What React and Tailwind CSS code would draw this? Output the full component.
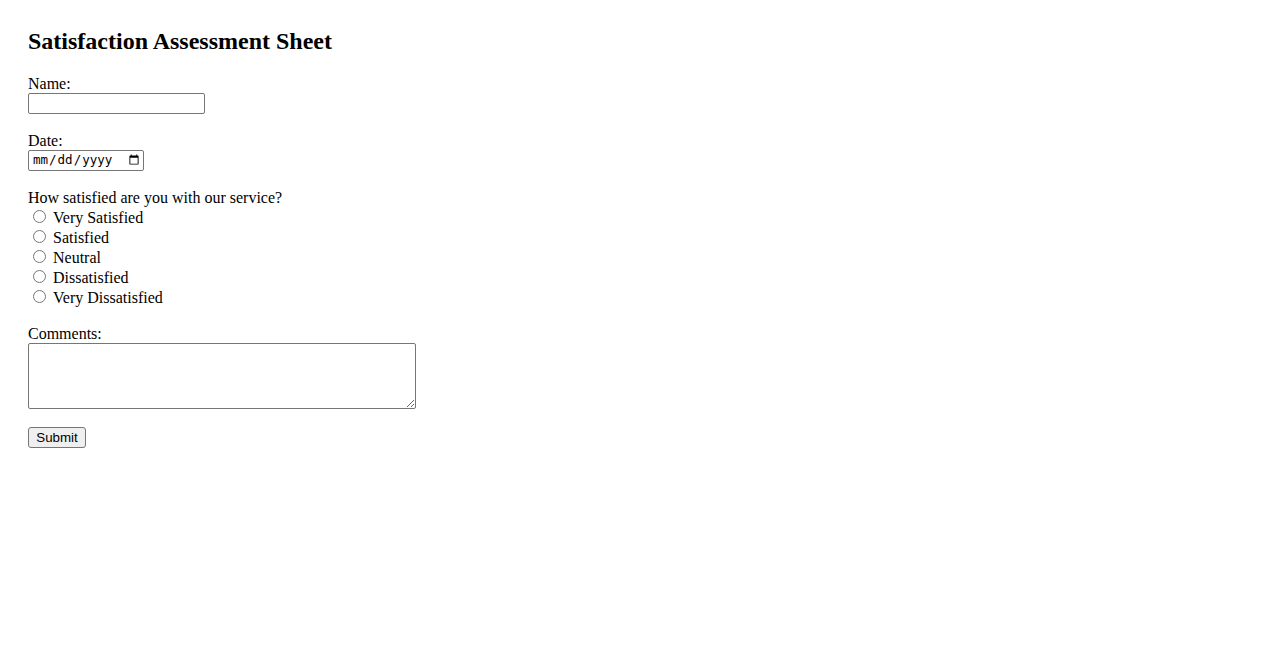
export default function App() {
  const options = ["Very Satisfied", "Satisfied", "Neutral", "Dissatisfied", "Very Dissatisfied"];
  return (
    <div className="min-h-[650px] bg-white text-black pt-[28px] pl-[28px] font-['Liberation_Serif',serif] text-[16px]">
      <h2 className="text-[24px] font-bold leading-[27px] h-[27px]">Satisfaction Assessment Sheet</h2>
      <form className="flex flex-col items-start mt-[20px]" onSubmit={(e) => e.preventDefault()}>
        <label htmlFor="name" className="leading-[18px] h-[18px]">Name:</label>
        <input
          id="name"
          type="text"
          className="w-[177px] h-[21px] border border-[#767676] rounded-[2px] px-[2px] text-[13.33px] font-['Liberation_Sans',sans-serif] bg-white"
        />
        <label htmlFor="date" className="leading-[18px] h-[18px] mt-[18px]">Date:</label>
        <input
          id="date"
          type="date"
          className="w-[116px] h-[21px] border border-[#767676] rounded-[2px] pl-[3px] pr-[1px] text-[12.5px] font-['DejaVu_Sans_Mono',monospace] bg-white"
        />
        <div className="leading-[18px] h-[18px] mt-[18px]">How satisfied are you with our service?</div>
        <div className="flex flex-col">
          {options.map((o) => (
            <label key={o} className="flex items-start h-[20px] leading-[20px]">
              <input type="radio" name="satisfaction" className="w-[13px] h-[13px] mt-[3px] ml-[5px] mr-[3px]" />
              <span className="ml-[4px] mt-[1px]">{o}</span>
            </label>
          ))}
        </div>
        <label htmlFor="comments" className="leading-[18px] h-[18px] mt-[18px]">Comments:</label>
        <textarea
          id="comments"
          className="w-[388px] h-[66px] border border-[#767676] rounded-[2px] p-[2px] text-[13px] font-['Liberation_Mono',monospace] bg-white"
        />
        <button
          type="submit"
          className="mt-[18px] w-[58px] h-[21px] bg-[#efefef] border border-[#767676] rounded-[3px] text-[13.33px] leading-[15px] font-['Liberation_Sans',sans-serif] text-black"
        >
          Submit
        </button>
      </form>
    </div>
  );
}
